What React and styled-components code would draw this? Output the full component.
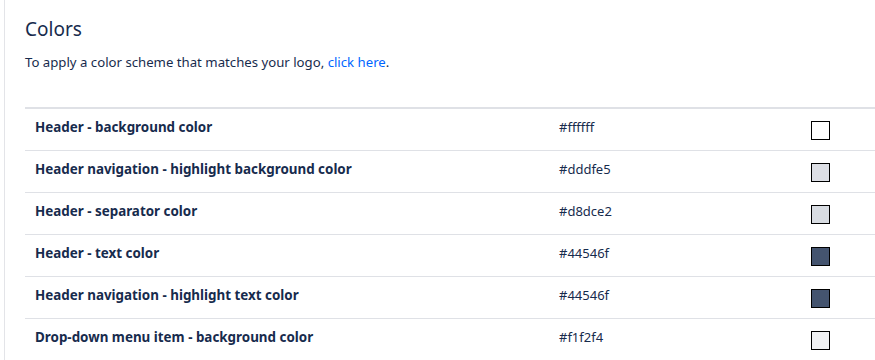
import React from "react";
import styled, { createGlobalStyle } from "styled-components";

const GlobalStyle = createGlobalStyle`
  html, body {
    margin: 0;
    padding: 0;
    background: #ffffff;
  }
  body {
    font-family: "Noto Sans", "Open Sans", "Liberation Sans", sans-serif;
    color: #172b4d;
  }
`;

const Page = styled.div`
  margin-left: 4px;
  border-left: 1px solid #e3e4e8;
  padding: 15px 0 0 20px;
  min-height: 360px;
  box-sizing: border-box;
  overflow: hidden;
`;

const Title = styled.h2`
  margin: 0;
  font-size: 19px;
  font-weight: 400;
  line-height: 28px;
  color: #172b4d;
`;

const Intro = styled.p`
  margin: 9px 0 0;
  font-size: 13.2px;
  line-height: 20px;
  color: #172b4d;
`;

const Link = styled.a`
  color: #0065ff;
  text-decoration: none;
`;

const Table = styled.table`
  margin-top: 35px;
  width: 860px;
  border-collapse: collapse;
  border-top: 2px solid #dfe1e6;
`;

const Row = styled.tr`
  border-bottom: 1px solid #dfe1e6;
  height: 42px;
`;

const Cell = styled.td`
  padding: 0 10px 4px;
  font-size: ${(p) => (p.$bold ? "13.4px" : "13px")};
  color: #172b4d;
  vertical-align: middle;
  width: ${(p) => p.$width || "auto"};
  font-weight: ${(p) => (p.$bold ? 700 : 400)};
`;

const Swatch = styled.span`
  display: block;
  width: 17px;
  height: 17px;
  margin-top: 6px;
  border: 1.5px solid #000000;
  background: ${(p) => p.$color};
`;

const colors = [
  { name: "Header - background color", value: "#ffffff" },
  { name: "Header navigation - highlight background color", value: "#dddfe5" },
  { name: "Header - separator color", value: "#d8dce2" },
  { name: "Header - text color", value: "#44546f" },
  { name: "Header navigation - highlight text color", value: "#44546f" },
  { name: "Drop-down menu item - background color", value: "#f1f2f4" },
];

export default function App() {
  return (
    <>
      <GlobalStyle />
      <Page>
        <Title>Colors</Title>
        <Intro>
          To apply a color scheme that matches your logo, <Link href="#">click here</Link>.
        </Intro>
        <Table>
          <tbody>
            {colors.map(({ name, value }, i) => (
              <Row key={i}>
                <Cell $bold $width="504px">{name}</Cell>
                <Cell $width="232px">{value}</Cell>
                <Cell>
                  <Swatch $color={value} />
                </Cell>
              </Row>
            ))}
          </tbody>
        </Table>
      </Page>
    </>
  );
}
